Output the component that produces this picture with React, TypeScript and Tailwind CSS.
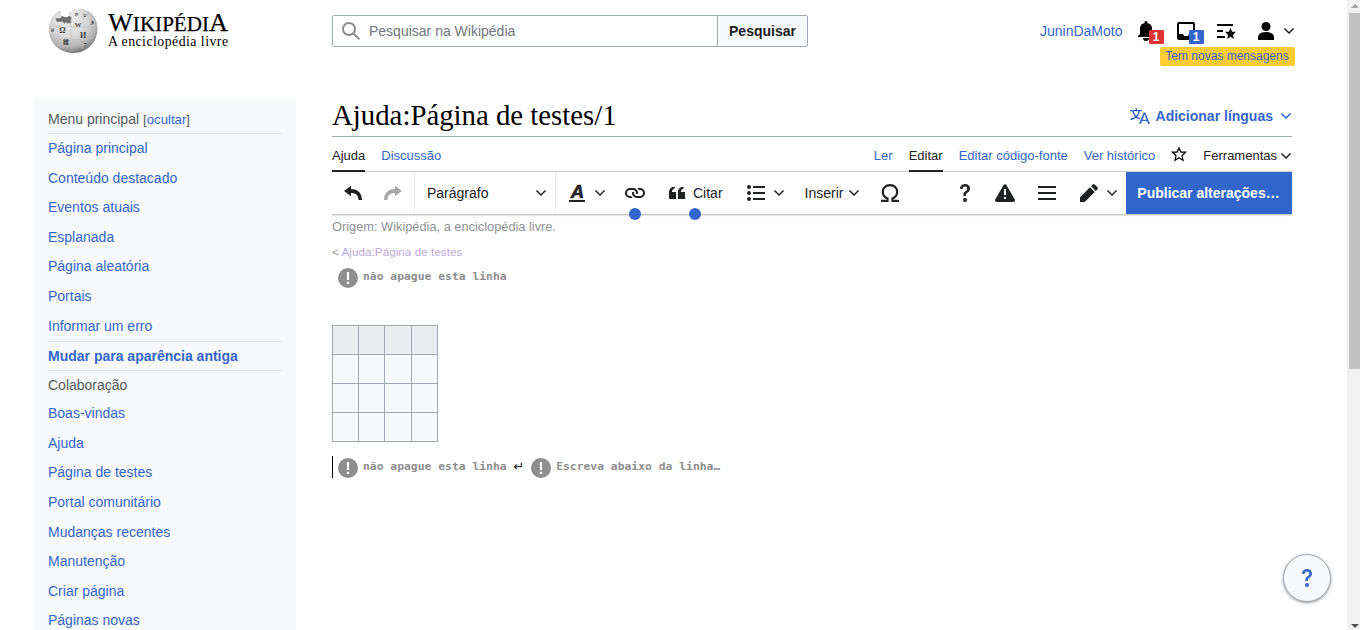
import React from "react";

type IconProps = { d: string; className?: string; children?: React.ReactNode };

function Icon({ d, className = "size-5", children }: IconProps) {
  return (
    <svg viewBox="0 0 20 20" fill="currentColor" className={`block shrink-0 ${className}`}>
      <path d={d} />
      {children}
    </svg>
  );
}

const paths = {
  search: "M12.2 13.6a7 7 0 1 1 1.4-1.4l5.4 5.4-1.4 1.4zM3 8a5 5 0 1 0 10 0A5 5 0 0 0 3 8",
  bell: "M16 7a5.38 5.38 0 0 0-4.46-4.85C11.6 1.46 11.53 0 10 0S8.4 1.46 8.46 2.15A5.38 5.38 0 0 0 4 7v6l-2 2v1h16v-1l-2-2zm-6 13a3 3 0 0 0 3-3H7a3 3 0 0 0 3 3",
  tray: "M3 1a2 2 0 0 0-2 2v14a2 2 0 0 0 2 2h14a2 2 0 0 0 2-2V3a2 2 0 0 0-2-2zm14 12h-4l-1 2H8l-1-2H3V3h14z",
  watchlist: "M1 3h16v2H1zm0 6h6v2H1zm0 6h8v2H1zm8-4.24h3.85L14.5 7l1.65 3.76H20l-3 3.17.9 4.05-3.4-2.14L11.1 18l.9-4.05z",
  user: "M10 11c-5.92 0-8 3-8 5v3h16v-3c0-2-2.08-5-8-5",
  undo: "M8 6V2.700L1 8l7 5.300V10c5 0 7.500 2.500 7.500 7H19c0-6.500-4-11-11-11",
  redo: "M12 6V2.700L19 8l-7 5.300V10c-5 0-7.500 2.500-7.500 7H1c0-6.500 4-11 11-11",
  link: "M4.83 15h2.91a4.9 4.9 0 0 1-1.55-2H5a3 3 0 1 1 0-6h3a3 3 0 0 1 2.82 4h2.1a5 5 0 0 0 .08-.83v-.34A4.83 4.83 0 0 0 8.17 5H4.83A4.83 4.83 0 0 0 0 9.83v.34A4.83 4.83 0 0 0 4.83 15M15.17 5h-2.91a4.9 4.9 0 0 1 1.55 2H15a3 3 0 1 1 0 6h-3a3 3 0 0 1-2.82-4h-2.1a5 5 0 0 0-.08.83v.34A4.83 4.83 0 0 0 11.83 15h3.34A4.83 4.83 0 0 0 20 10.17v-.34A4.83 4.83 0 0 0 15.17 5",
  quotes: "M7 6l1-2H6C3.790 4 2 6.790 2 9v7h7V9H5c0-3 2-3 2-3m9 0 1-2h-2c-2.210 0-4 2.790-4 5v7h7V9h-4c0-3 2-3 2-3",
  list: "M7 15h12v2H7zm0-6h12v2H7zm0-6h12v2H7z",
  help: "M10.06 1C13 1 15 2.89 15 5.53a4.59 4.59 0 0 1-2.29 4.08c-1.42.92-1.82 1.53-1.82 2.71V13H8.38v-.81a3.84 3.84 0 0 1 2-3.84c1.34-.9 1.79-1.53 1.79-2.71a2.1 2.1 0 0 0-2.08-2.14h-.17a2.3 2.3 0 0 0-2.38 2.22v.17H5A4.71 4.71 0 0 1 9.51 1a5 5 0 0 1 .55 0",
  alert: "M11.53 2.3A1.85 1.85 0 0 0 10 1.21 1.85 1.85 0 0 0 8.48 2.3L.36 16.36C-.48 17.81.21 19 1.88 19h16.24c1.67 0 2.36-1.19 1.52-2.64zM11 16H9v-2h2zm0-4H9V6h2z",
  menu: "M1 3v2h18V3zm0 8h18V9H1zm0 6h18v-2H1z",
  edit: "m16.77 8 1.94-2a1 1 0 0 0 0-1.41l-3.34-3.3a1 1 0 0 0-1.41 0L12 3.23zM1 14.25V19h4.75l9.96-9.96-4.75-4.75z",
  star: "M20 7h-7L10 .5 7 7H0l5.460 5.470-1.640 7 6.180-3.700 6.180 3.730-1.630-7zm-10 6.900-3.900 2.300 1-4.400L3.700 8.400h4.400L10 4.300l1.900 4.100h4.400l-3.400 3.400 1 4.400z",
  language: "M20 18h-1.44a.6.6 0 0 1-.4-.12.8.8 0 0 1-.23-.31L17 15h-5l-1 2.540a.8.8 0 0 1-.22.3.6.6 0 0 1-.4.14H9l4.550-11.470h1.890zm-3.530-4.310L14.890 9.500a12 12 0 0 1-.39-1.240q-.09.37-.19.69l-.19.56-1.580 4.190zm-6.300-1.580a13.400 13.400 0 0 1-2.910-1.410 11.460 11.460 0 0 0 2.810-5.370H12V4H7.310a4 4 0 0 0-.2-.56C6.870 2.790 6.600 2 6.600 2l-1.470.5s.4.89.6 1.500H0v1.330h2.150A11.230 11.230 0 0 0 5 10.700a17.200 17.200 0 0 1-5 2.100q.56.82.87 1.380a23.300 23.300 0 0 0 5.220-2.510 15.600 15.600 0 0 0 3.560 1.770zM3.630 5.330h4.910a8.100 8.100 0 0 1-2.450 4.450 9.100 9.100 0 0 1-2.460-4.450",
  notice: "M10 0a10 10 0 1 0 0 20 10 10 0 0 0 0-20m1.100 16H8.900v-2.200h2.200zm0-4H8.900V4h2.200z",
};

function Chevron({ className = "size-3" }: { className?: string }) {
  return (
    <svg viewBox="0 0 12 12" fill="currentColor" className={`block shrink-0 ${className}`}>
      <path d="M11.050 3.996 10 2.900 6 6.900l-4-4L.95 3.996 6 9.050z" />
    </svg>
  );
}

function Globe() {
  return (
    <svg viewBox="0 0 50 46" className="block h-[46px] w-[50px] shrink-0">
      <defs>
        <radialGradient id="ball" cx="42%" cy="30%" r="70%">
          <stop offset="0" stopColor="#eeeeee" />
          <stop offset=".5" stopColor="#dadada" />
          <stop offset=".82" stopColor="#b0b0b0" />
          <stop offset="1" stopColor="#777" />
        </radialGradient>
      </defs>
      <path
        d="M6 6.500 9 4l3-1.500 1.500 1-.5 3.500 3 2.500 4-1.500 1.500-4.500 3 .5L26 1l4 1 1-1.500 4 .2 3 2 1.500-.2C46 6 49.500 13 49.500 20.500 49.500 34 39 45 25.500 45S1 35 1 22C1 15 3 10 6 6.500z"
        fill="url(#ball)"
      />
      <path d="M7.500 10.500 13 10l.5-2 5 1.500 2.500-1.500 2.500 1-.5 3 .5 3-4 .5-1.500-1.500-1.500 2-2-2.500-5.500.5z" fill="#6e6e6e" />
      <g fill="none" stroke="#bcbcbc" strokeWidth=".6">
        <path d="M2 19c4-2 5 1 8 0s4 2 8 0 6 1 10 0 6 2 10 0 6 1 10 0M3 31c4-2 6 1 9 0s6 1 9 0 7 2 11 0 6 1 13-1M11 38c5-1 8 2 12 0s9 1 15-1" />
        <path d="M10 18c1 5-2 7 1 12s0 6 3 10M23 12c-2 4 2 7 0 8s2 7 0 11 2 8 1 13M35 5c2 5-2 8 1 13s-1 8 1 13-2 6-3 10" />
      </g>
      <g fill="#444" fontFamily="Liberation Serif, DejaVu Serif, Noto Sans CJK JP, serif" textAnchor="middle" fontWeight="bold">
        <text x="14.500" y="24.500" fontSize="8">Ω</text>
        <text x="30" y="18.500" fontSize="7">W</text>
        <text x="35" y="29.500" fontSize="8">И</text>
        <text x="18" y="35.500" fontSize="6">維</text>
        <text x="37" y="38.500" fontSize="6">7</text>
        <text x="37" y="9" fontSize="5">ש</text>
        <text x="28" y="7" fontSize="5">த</text>
        <text x="44" y="15" fontSize="6">و</text>
        <text x="4" y="24" fontSize="5">त</text>
      </g>
    </svg>
  );
}

function Logo() {
  return (
    <div className="flex w-[284px] shrink-0 gap-[10px] pt-2">
      <Globe />
      <svg viewBox="0 0 122 42" className="block h-[42px] w-[122px]" fill="#000" stroke="#000" strokeWidth=".25" fontFamily="Liberation Serif, serif">
        <text x="0" y="22.800" textLength="120" lengthAdjust="spacingAndGlyphs" fontSize="25">
          W<tspan fontSize="20">IKIPÉDI</tspan>A
        </text>
        <text x="0" y="37.700" textLength="120" lengthAdjust="spacing" strokeWidth="0" fontSize="13.800">A enciclopédia livre</text>
      </svg>
    </div>
  );
}

const mainMenu = [
  "Página principal",
  "Conteúdo destacado",
  "Eventos atuais",
  "Esplanada",
  "Página aleatória",
  "Portais",
  "Informar um erro",
];
const collaboration = [
  "Boas-vindas",
  "Ajuda",
  "Página de testes",
  "Portal comunitário",
  "Mudanças recentes",
  "Manutenção",
  "Criar página",
  "Páginas novas",
];

function MenuItem({ label }: { label: string }) {
  return <li className="flex h-[29.600px] shrink-0 items-center">{label}</li>;
}

function Sidebar() {
  return (
    <nav className="flex h-[531px] w-[262px] shrink-0 flex-col overflow-hidden bg-[#f8f9fa] px-[14px] pt-[5px] text-sm text-[#3366cc]">
      <div className="flex h-[30px] shrink-0 items-center gap-1 border-b border-[#eaecf0] text-[#54595d]">
        <span>Menu principal</span>
        <span className="pt-[3px] text-[13.200px] leading-4">
          [<span className="text-[#3366cc]">ocultar</span>]
        </span>
      </div>
      <ul className="-mt-[0.750px] flex flex-col pb-[0.750px]">
        {mainMenu.map((m) => (
          <MenuItem key={m} label={m} />
        ))}
      </ul>
      <div className="flex h-[30px] shrink-0 items-center border-y border-[#eaecf0] font-bold">Mudar para aparência antiga</div>
      <div className="flex h-[27.300px] shrink-0 items-center text-[#54595d]">Colaboração</div>
      <ul className="flex flex-col">
        {collaboration.map((m) => (
          <MenuItem key={m} label={m} />
        ))}
      </ul>
    </nav>
  );
}

function Header() {
  return (
    <header className="flex h-[99px] items-start pl-[48px]">
      <Logo />
      <div className="mt-[15px] flex h-8 w-[476px] text-[14px]">
        <div className="flex w-[386px] items-center gap-[8px] rounded-l-[2px] border border-[#a2a9b1] pl-2 text-[#72777d]">
          <Icon d={paths.search} className="size-5 text-[#8e8e8e]" />
          <span>Pesquisar na Wikipédia</span>
        </div>
        <div className="-ml-px flex w-[91px] items-center justify-center rounded-r-[2px] border border-[#a2a9b1] bg-[#f8f9fa] font-bold text-[#202122]">
          Pesquisar
        </div>
      </div>
      <div className="ml-auto flex w-[256px] flex-col pt-[21px]">
        <div className="flex h-5 items-center text-black">
          <span className="w-[96px] shrink-0 text-sm whitespace-nowrap text-[#3366cc]">JuninDaMoto</span>
          <span className="relative w-[40px] shrink-0">
            <Icon d={paths.bell} />
            <span className="absolute top-[9px] left-[13px] flex h-[14px] w-[15px] items-center justify-center rounded-[1px] bg-[#dd3333] pr-px text-xs font-bold text-white">1</span>
          </span>
          <span className="relative w-[40px] shrink-0">
            <Icon d={paths.tray} />
            <span className="absolute top-[9px] left-[13px] flex h-[14px] w-[15px] items-center justify-center rounded-[1px] bg-[#3366cc] pr-px text-xs font-bold text-white">1</span>
          </span>
          <Icon d={paths.watchlist} />
          <Icon d={paths.user} className="ml-5 size-5">
            <circle cx="10" cy="5.500" r="4.500" />
          </Icon>
          <Chevron className="ml-[7px] size-3 text-[#202122]" />
        </div>
        <div className="mt-[6px] mr-px flex h-[19px] w-[135px] items-center justify-center self-end rounded-[2px] bg-[#ffcc33] pr-px pb-px text-xs text-[#3366cc]">
          Tem novas mensagens
        </div>
      </div>
    </header>
  );
}

function Tab({ label, active }: { label: string; active?: boolean }) {
  return active ? (
    <span className="flex h-[35px] items-center border-b-2 border-[#202122] pt-[4px] text-[#202122]">{label}</span>
  ) : (
    <span className="flex h-[35px] items-center pt-[2px] text-[#3366cc]">{label}</span>
  );
}

function Tabs() {
  return (
    <div className="flex h-[35px] items-start border-b border-[#c8ccd1] text-[13px]">
      <div className="flex gap-4">
        <Tab label="Ajuda" active />
        <Tab label="Discussão" />
      </div>
      <div className="ml-auto flex items-start gap-4">
        <Tab label="Ler" />
        <Tab label="Editar" active />
        <Tab label="Editar código-fonte" />
        <Tab label="Ver histórico" />
        <Icon d={paths.star} className="mt-[9px] size-4 text-black" />
        <span className="flex h-[35px] items-center gap-[3px] pt-[2px] text-[#202122]">
          Ferramentas
          <Chevron />
        </span>
      </div>
    </div>
  );
}

function Hotspot({ className }: { className: string }) {
  return <span className={`absolute size-3 rounded-full bg-[#3366cc] ${className}`} />;
}

function Toolbar() {
  return (
    <div className="flex h-[43px] items-center border-b border-[#c8ccd1] text-sm text-[#202122] shadow-[0_1px_1px_0_rgba(0,0,0,0.1)]">
      <div className="flex h-full w-[83px] shrink-0 items-center justify-between border-r border-[#eaecf0] pr-[11px] pl-[11px]">
        <Icon d={paths.undo} />
        <Icon d={paths.redo} className="size-5 text-[#a7a7a7]" />
      </div>
      <div className="flex h-full w-[141px] shrink-0 items-center justify-between border-r border-[#eaecf0] pr-[8px] pl-3">
        <span>Parágrafo</span>
        <Chevron />
      </div>
      <div className="flex w-[69px] shrink-0 items-center pl-3">
        <svg viewBox="0 0 20 20" className="mr-[6px] block size-5 overflow-visible" fill="currentColor">
          <text x="2.800" y="15.200" fontSize="18.500" fontFamily="Liberation Sans, sans-serif" fontWeight="bold" fontStyle="italic" stroke="currentColor" strokeWidth=".6">A</text>
          <rect x="1" y="17" width="16" height="2" />
        </svg>
        <Chevron />
      </div>
      <div className="relative shrink-0">
        <Icon d={paths.link} />
        <Hotspot className="top-[25px] left-[4px]" />
      </div>
      <div className="relative ml-[22px] flex shrink-0 items-center gap-[6px]">
        <Icon d={paths.quotes} />
        <span>Citar</span>
        <Hotspot className="top-[25px] left-[22px]" />
      </div>
      <Icon d={paths.list} className="ml-[23px] size-5">
        <circle cx="3" cy="4" r="2" />
        <circle cx="3" cy="10" r="2" />
        <circle cx="3" cy="16" r="2" />
      </Icon>
      <Chevron className="ml-[7px] size-3" />
      <span className="ml-[20px]">Inserir</span>
      <Chevron className="ml-[5px] size-3" />
      <svg viewBox="0 0 20 20" className="ml-[20px] block size-5 shrink-0" fill="none" stroke="currentColor" strokeWidth="2.200">
        <path d="M1 17.900h6.500v-2.400C4.300 14 2.800 11.600 2.800 8.900 2.800 5 5.800 2.100 10 2.100s7.200 2.900 7.200 6.800c0 2.700-1.500 5.100-4.700 6.600v2.400H19" />
      </svg>
      <div className="ml-auto flex h-full shrink-0 items-center">
        <Icon d={paths.help} className="mr-5 size-5">
          <circle cx="10" cy="17" r="2" />
        </Icon>
        <Icon d={paths.alert} className="mr-[22px] size-5" />
        <Icon d={paths.menu} className="mr-[22px] size-5" />
        <Icon d={paths.edit} className="mr-[7px] size-5" />
        <Chevron className="mr-[8px] size-3" />
        <div className="flex h-[42px] w-[166px] items-center justify-center bg-[#3366cc] pr-px text-sm font-bold whitespace-nowrap text-white">
          Publicar alterações…
        </div>
      </div>
    </div>
  );
}

function Comment({ text }: { text: string }) {
  return (
    <span className="flex shrink-0 items-start gap-[5px] text-[#8e8e8e]">
      <Icon d={paths.notice} className="mt-[2px] size-5" />
      <span className="font-['DejaVu_Sans_Mono',monospace] text-[11.375px] leading-[20px] font-bold whitespace-pre">{text}</span>
    </span>
  );
}

function Grid() {
  return (
    <table className="mt-[37px] h-[117px] w-[106px] table-fixed border-collapse">
      <colgroup>
        <col className="w-[26px]" />
        <col className="w-[26px]" />
        <col className="w-[27px]" />
        <col className="w-[26px]" />
      </colgroup>
      <tbody>
        {[0, 1, 2, 3].map((r) => (
          <tr key={r} className={r === 0 ? "h-[29px] bg-[#eaecf0]" : "h-[29px] bg-[#f8f9fa]"}>
            {[0, 1, 2, 3].map((c) => (
              <td key={c} className="border border-[#a2a9b1] p-0" />
            ))}
          </tr>
        ))}
      </tbody>
    </table>
  );
}

function Article() {
  return (
    <main className="ml-[36px] w-[960px] shrink-0">
      <div className="flex h-[38px] items-center justify-between border-b border-[#a2a9b1]">
        <h1 className="pb-[6px] font-['Liberation_Serif',serif] text-[28.800px] leading-[36px] text-black">Ajuda:Página de testes/1</h1>
        <div className="flex items-center pb-[3px] text-sm font-bold text-[#3366cc]">
          <Icon d={paths.language} className="mr-[6px] size-5" />
          Adicionar línguas
          <Chevron className="ml-[7px] size-3" />
        </div>
      </div>
      <Tabs />
      <Toolbar />
      <div className="mt-[3px] text-[12.800px] leading-[18px] text-[#909193]">Origem: Wikipédia, a enciclopédia livre.</div>
      <div className="mt-[8px] text-[11.760px] leading-[16px] text-[#909193]">
        &lt; <span className="text-[#bcaadb]">Ajuda:Página de testes</span>
      </div>
      <div className="mt-[6px] flex h-[22px] pl-[6px]">
        <Comment text="não apague esta linha" />
      </div>
      <Grid />
      <div className="mt-[14px] flex h-[22px] border-l border-black pl-[5px]">
        <Comment text="não apague esta linha" />
        <span className="w-[24.500px] pt-px text-center font-['DejaVu_Sans',sans-serif] text-[13px] leading-[20px] text-[#202122]">↵</span>
        <Comment text="Escreva abaixo da linha…" />
      </div>
    </main>
  );
}

function Scrollbar() {
  return (
    <div className="flex h-full w-[13px] shrink-0 flex-col items-end bg-[#f1f1f1]">
      <div className="flex h-[13px] w-[11px] shrink-0 items-start justify-center pt-[4px]">
        <svg viewBox="0 0 8 4" className="block h-1 w-2" fill="#a3a3a3">
          <path d="M0 4 4 0l4 4z" />
        </svg>
      </div>
      <div className="h-[356px] w-[11px] bg-[#c1c1c1]" />
      <div className="mt-auto flex h-[8px] w-[11px] justify-center pt-[2px]">
        <svg viewBox="0 0 8 4" className="block h-1 w-2" fill="#505050">
          <path d="m0 0 4 4 4-4z" />
        </svg>
      </div>
    </div>
  );
}

export default function App() {
  return (
    <div className="relative flex h-[630px] w-[1360px] overflow-hidden bg-white font-['Liberation_Sans',sans-serif]">
      <div className="flex w-[1347px] shrink-0 flex-col">
        <div className="w-[1296px]">
          <Header />
        </div>
        <div className="flex pl-[34px]">
          <Sidebar />
          <Article />
        </div>
      </div>
      <Scrollbar />
      <button className="absolute top-[554px] left-[1283px] flex size-12 items-center justify-center rounded-full border border-[#a2a9b1] bg-[#f8f9fa] text-[#3366cc] shadow-[0_1px_3px_rgba(0,0,0,0.4)]">
        <Icon d={paths.help} className="size-5">
          <circle cx="10" cy="17" r="2" />
        </Icon>
      </button>
    </div>
  );
}
